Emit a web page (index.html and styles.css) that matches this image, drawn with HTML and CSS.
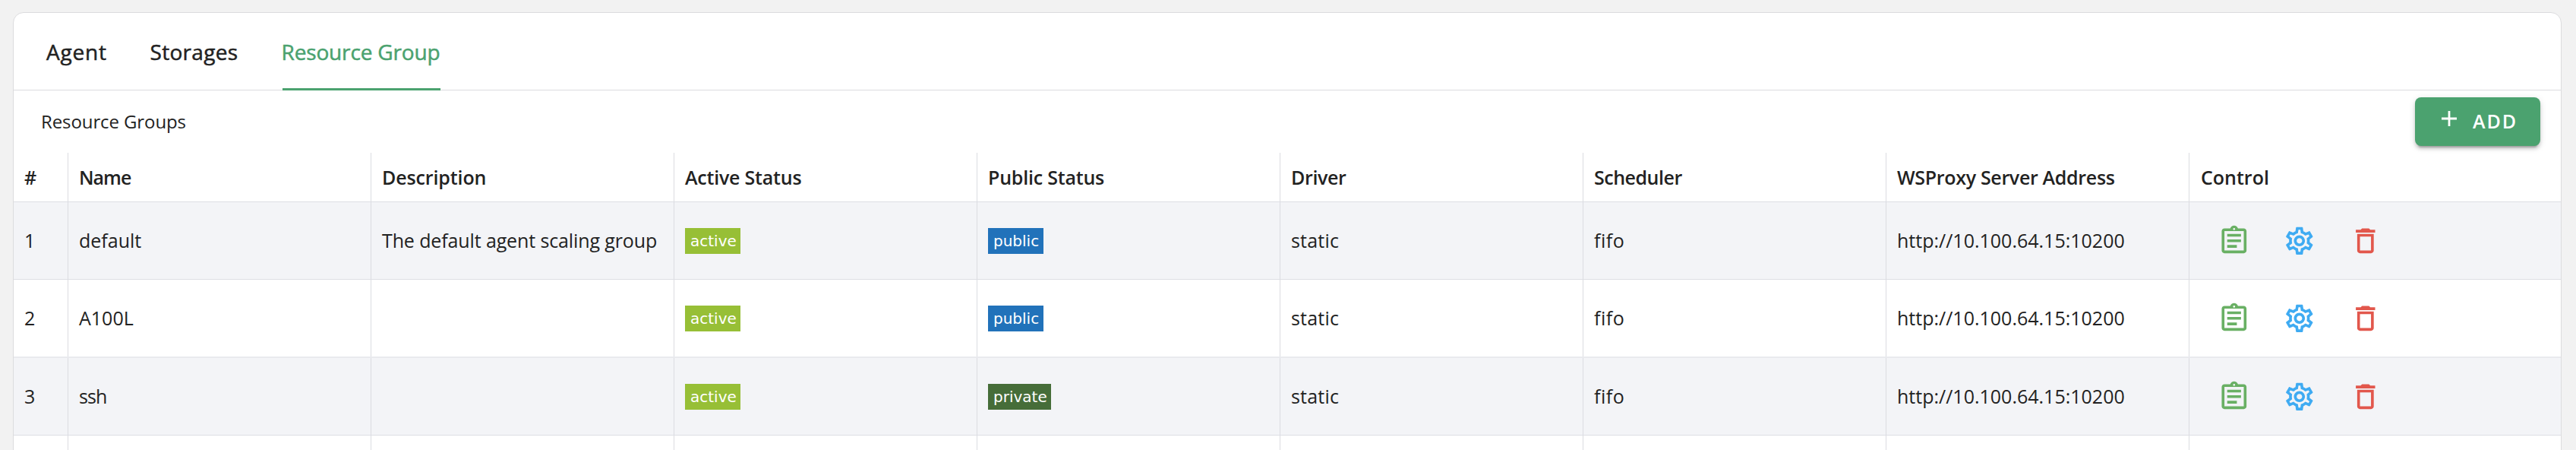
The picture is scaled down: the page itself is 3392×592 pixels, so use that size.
FILE: index.html
```html
<!DOCTYPE html>
<html lang="en">
<head>
<meta charset="utf-8">
<title>Resource Group</title>
<link rel="stylesheet" href="styles.css">
</head>
<body>
<svg class="sprite" aria-hidden="true">
  <symbol id="clipboard" viewBox="0 0 24 24"><path d="M7 15h7v2H7zm0-4h10v2H7zm0-4h10v2H7zm12-4h-4.180C14.400 1.840 13.300 1 12 1s-2.400.840-2.820 2H5c-1.100 0-2 .9-2 2v14c0 1.100.9 2 2 2h14c1.100 0 2-.9 2-2V5c0-1.100-.9-2-2-2zm-7-.25c.410 0 .750.340.750.750s-.340.750-.750.750-.750-.340-.750-.750.340-.750.750-.750zM19 19H5V5h14v14z"/></symbol>
  <symbol id="gear" viewBox="0 0 24 24"><path d="M19.430 12.980c.04-.32.07-.64.07-.98s-.03-.66-.07-.98l2.110-1.650c.19-.15.24-.42.12-.64l-2-3.460c-.09-.16-.26-.25-.44-.25-.06 0-.12.01-.17.03l-2.490 1c-.52-.4-1.080-.73-1.690-.98l-.38-2.650C14.460 2.180 14.250 2 14 2h-4c-.25 0-.46.18-.49.42l-.38 2.650c-.61.25-1.170.59-1.690.98l-2.490-1c-.06-.02-.12-.03-.18-.03-.17 0-.34.09-.43.25l-2 3.460c-.13.22-.07.49.12.64l2.110 1.650c-.04.32-.07.65-.07.98s.03.66.07.98l-2.110 1.650c-.19.15-.24.42-.12.64l2 3.460c.09.16.26.25.44.25.06 0 .12-.01.17-.03l2.490-1c.52.4 1.080.73 1.690.98l.38 2.650c.03.24.24.42.49.42h4c.25 0 .46-.18.49-.42l.38-2.650c.61-.25 1.170-.59 1.690-.98l2.490 1c.06.02.12.03.18.03.17 0 .34-.09.43-.25l2-3.460c.12-.22.07-.49-.12-.64l-2.110-1.650zm-1.980-1.710c.04.31.05.52.05.73s-.02.43-.05.73l-.14 1.130.89.7 1.080.84-.7 1.210-1.270-.51-1.040-.42-.9.68c-.43.32-.84.56-1.250.73l-1.060.43-.16 1.130-.2 1.350h-1.400l-.19-1.350-.16-1.130-1.060-.43c-.43-.18-.83-.41-1.230-.71l-.91-.7-1.060.43-1.270.51-.7-1.210 1.080-.84.89-.7-.14-1.130c-.03-.31-.05-.54-.05-.74s.02-.43.05-.73l.14-1.130-.89-.7-1.080-.84.7-1.210 1.270.51 1.040.42.9-.68c.43-.32.84-.56 1.250-.73l1.060-.43.16-1.130.2-1.350h1.390l.19 1.350.16 1.130 1.060.43c.43.18.83.41 1.230.71l.91.7 1.060-.43 1.270-.51.7 1.210-1.070.85-.89.7.14 1.130zM12 8c-2.210 0-4 1.790-4 4s1.790 4 4 4 4-1.790 4-4-1.790-4-4-4zm0 6c-1.100 0-2-.9-2-2s.9-2 2-2 2 .9 2 2-.9 2-2 2z"/></symbol>
  <symbol id="trash" viewBox="0 0 24 24"><path d="M6 19c0 1.100.9 2 2 2h8c1.100 0 2-.9 2-2V7H6v12zM8 9h8v10H8V9zm7.500-5l-1-1h-5l-1 1H5v2h14V4z"/></symbol>
</svg>
<main class="card">
  <nav class="tabs">
    <a class="tab tab-agent">Agent</a>
    <a class="tab tab-storages">Storages</a>
    <a class="tab tab-group active">Resource Group</a>
  </nav>
  <header class="toolbar">
    <h4 class="title">Resource Groups</h4>
    <button class="add"><svg class="plus" viewBox="0 0 20 20"><path d="M10 0v20M0 10h20"/></svg><span>ADD</span></button>
  </header>
  <section class="grid">
    <div class="row head">
      <div class="cell">#</div>
      <div class="cell t-name">Name</div>
      <div class="cell t-desc">Description</div>
      <div class="cell t-status">Active Status</div>
      <div class="cell t-status">Public Status</div>
      <div class="cell t-driver">Driver</div>
      <div class="cell t-sched">Scheduler</div>
      <div class="cell t-proxy">WSProxy Server Address</div>
      <div class="cell t-control">Control</div>
    </div>
    <div class="row odd">
      <div class="cell">1</div>
      <div class="cell">default</div>
      <div class="cell t-desc">The default agent scaling group</div>
      <div class="cell pill"><span class="badge lime">active</span></div>
      <div class="cell pill"><span class="badge blue">public</span></div>
      <div class="cell t-static">static</div>
      <div class="cell t-fifo">fifo</div>
      <div class="cell">http://10.100.64.15:10200</div>
      <div class="cell controls"><svg class="icon info"><use href="#clipboard"/></svg><svg class="icon edit"><use href="#gear"/></svg><svg class="icon delete"><use href="#trash"/></svg></div>
    </div>
    <div class="row even">
      <div class="cell">2</div>
      <div class="cell">A100L</div>
      <div class="cell"></div>
      <div class="cell pill"><span class="badge lime">active</span></div>
      <div class="cell pill"><span class="badge blue">public</span></div>
      <div class="cell t-static">static</div>
      <div class="cell t-fifo">fifo</div>
      <div class="cell">http://10.100.64.15:10200</div>
      <div class="cell controls"><svg class="icon info"><use href="#clipboard"/></svg><svg class="icon edit"><use href="#gear"/></svg><svg class="icon delete"><use href="#trash"/></svg></div>
    </div>
    <div class="row odd">
      <div class="cell">3</div>
      <div class="cell t-ssh">ssh</div>
      <div class="cell"></div>
      <div class="cell pill"><span class="badge lime">active</span></div>
      <div class="cell pill"><span class="badge green">private</span></div>
      <div class="cell t-static">static</div>
      <div class="cell t-fifo">fifo</div>
      <div class="cell">http://10.100.64.15:10200</div>
      <div class="cell controls"><svg class="icon info"><use href="#clipboard"/></svg><svg class="icon edit"><use href="#gear"/></svg><svg class="icon delete"><use href="#trash"/></svg></div>
    </div>
    <div class="row rest">
      <div class="cell"></div><div class="cell"></div><div class="cell"></div><div class="cell"></div><div class="cell"></div><div class="cell"></div><div class="cell"></div><div class="cell"></div><div class="cell"></div>
    </div>
  </section>
</main>
</body>
</html>
```
FILE: styles.css
```css
* { box-sizing: border-box; }
body {
  margin: 0;
  height: 592px;
  overflow: hidden;
  padding: 16px 19px 0 17px;
  background: #f2f2f2;
  color: #222;
  font-family: "Open Sans", "Noto Sans", sans-serif;
  font-size: 25px;
}
.sprite { display: none; }
.card {
  height: 600px;
  display: flex;
  flex-direction: column;
  background: #fff;
  border: 1px solid #dcdcde;
  border-radius: 14px 14px 0 0;
  overflow: hidden;
}
.tabs {
  display: flex;
  flex: none;
  gap: 57px;
  height: 102px;
  padding-left: 43px;
  border-bottom: 1px solid #dcdcdf;
  font-size: 28px;
  font-weight: 500;
  -webkit-text-stroke: .5px currentColor;
  line-height: 102px;
}
.tab { height: 102px; white-space: nowrap; }
.tab-agent { width: 79.5px; letter-spacing: .8px; }
.tab-storages { width: 117px; letter-spacing: .3px; }
.tab-group { width: 208px; letter-spacing: -.15px; text-indent: -1px; }
.tab.active { color: #4ba26f; border-bottom: 3px solid #4ba26f; }
.toolbar {
  display: flex;
  flex: none;
  align-items: center;
  justify-content: space-between;
  height: 82px;
  padding: 0 27px 0 36px;
}
.title {
  margin: 0;
  padding-bottom: 2px;
  font-size: 24px;
  font-weight: 400;
  letter-spacing: -.1px;
}
.add {
  display: flex;
  align-items: center;
  width: 165px;
  height: 64px;
  padding: 0 0 0 35px;
  gap: 21px;
  border: 0;
  border-radius: 8px;
  background: #4ba26f;
  color: #fff;
  font: 600 25px "Open Sans", sans-serif;
  letter-spacing: 2px;
  box-shadow: 0 6px 2px -4px rgba(0,0,0,.2), 0 4px 4px rgba(0,0,0,.14), 0 2px 10px rgba(0,0,0,.12);
}
.add span { padding-bottom: 3px; }
.plus { width: 20px; height: 20px; margin-bottom: 9px; fill: none; stroke: #fff; stroke-width: 2.8; }
.row {
  display: grid;
  grid-template-columns: 72px repeat(7, 399px) 1fr;
  height: 102px;
  border-bottom: 1px solid #dddee4;
}
.cell {
  display: flex;
  align-items: center;
  padding: 0 0 1px 14px;
  border-right: 1px solid #dbdce1;
  white-space: nowrap;
}
.cell:last-child { border-right: 0; }
.head { height: 65px; font-weight: 600; }
.head .cell { padding-bottom: 0; }
.odd { background: #f3f4f7; }
.even { height: 103px; border-bottom: 2px solid #e9eaee; }
.rest { border: 0; height: 40px; }
.t-name { letter-spacing: -1px; }
.t-desc { letter-spacing: -.12px; }
.t-status { letter-spacing: -.21px; }
.t-driver { letter-spacing: -.36px; }
.t-sched { letter-spacing: -.48px; }
.t-proxy { letter-spacing: -.32px; }
.head .t-control { padding-left: 15px; }
.t-ssh { letter-spacing: -.9px; }
.t-static { letter-spacing: .2px; }
.t-fifo { letter-spacing: .5px; }
.cell.pill { padding-bottom: 0; }
.badge {
  height: 34px;
  padding: 0 5px 0 7px;
  font: 20px/34px "DejaVu Sans", sans-serif;
  color: #fff;
}
.lime { background: #97bf36; }
.blue { background: #2172ba; padding-right: 6px; }
.green { background: #466d39; }
.cell.controls { gap: 42.7px; padding: 0 0 0 37px; }
.icon { width: 43.6px; height: 43.6px; }
.info { fill: #69b064; }
.edit { fill: #3fabf2; }
.delete { fill: #e2574c; }
```
